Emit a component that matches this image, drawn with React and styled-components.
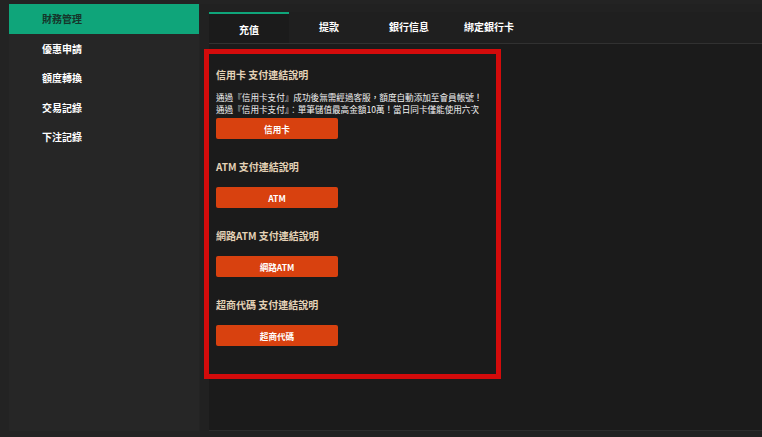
import React from "react";
import styled, { createGlobalStyle } from "styled-components";

const Global = createGlobalStyle`
  html, body { margin: 0; padding: 0; background: #232323; }
  body { font-family: "Noto Sans CJK TC", "Noto Sans", "Liberation Sans", sans-serif; }
  * { box-sizing: border-box; }
`;

const Page = styled.div`
  display: flex;
  height: 437px;
  padding: 4px 0 0 9px;
  background: #232323;
`;

const Sidebar = styled.nav`
  width: 190px;
  height: 427px;
  background: #262626;
  display: flex;
  flex-direction: column;
`;

const MenuItem = styled.div`
  height: 29.5px;
  display: flex;
  align-items: center;
  padding-left: 33px;
  font-size: 10px;
  font-weight: 700;
  color: ${(p) => (p.$active ? "#15352a" : "#ffffff")};
  background: ${(p) => (p.$active ? "#0fa57a" : "transparent")};
`;

const Main = styled.main`
  flex: 1;
  display: flex;
  flex-direction: column;
  margin-left: 1px;
  padding: 8px 0 6px 9px;
  background: #212121;
`;

const TabBar = styled.div`
  display: flex;
  height: 32px;
  border-bottom: 1px solid #313131;
  background: #1f1f1f;
`;

const Tab = styled.div`
  width: 80px;
  display: flex;
  justify-content: center;
  align-items: ${(p) => (p.$active ? "center" : "flex-start")};
  padding-top: ${(p) => (p.$active ? "2px" : "5px")};
  font-size: 10px;
  font-weight: 700;
  color: #ffffff;
  background: ${(p) => (p.$active ? "#1b1b1b" : "transparent")};
  border-top: 2px solid ${(p) => (p.$active ? "#0fa57a" : "transparent")};
`;

const Panel = styled.div`
  flex: 1;
  background: #1b1b1b;
  border-bottom: 1px solid #2c2c2c;
  padding-top: 5px;
`;

const Highlight = styled.div`
  width: 297px;
  margin-left: -5px;
  border: 5px solid #d30b0b;
  padding: 14px 0 28px 7px;
  display: flex;
  flex-direction: column;
  gap: 21px;
`;

const Section = styled.section`
  display: flex;
  flex-direction: column;
  align-items: flex-start;
`;

const Title = styled.div`
  font-size: 10px;
  line-height: 14px;
  font-weight: 700;
  color: #e4d2b6;
  margin-bottom: 13px;
  white-space: nowrap;
`;

const Desc = styled.div`
  font-size: 8.6px;
  line-height: 12px;
  color: #f2f2f2;
  margin: -4px 0 3px;
  white-space: nowrap;
`;

const PayButton = styled.button`
  width: 122px;
  height: 21px;
  border: none;
  border-radius: 2px;
  background: #d8410f;
  color: #ffffff;
  font-family: inherit;
  font-size: 8.6px;
  font-weight: 700;
  padding: 0;
  cursor: pointer;
`;

const menu = ["財務管理", "優惠申請", "額度轉換", "交易記錄", "下注記錄"];
const tabs = ["充值", "提款", "銀行信息", "綁定銀行卡"];
const methods = [
  {
    title: "信用卡 支付連結說明",
    button: "信用卡",
    desc: [
      "通過『信用卡支付』成功後無需經過客服，額度自動添加至會員帳號！",
      "通過『信用卡支付』：單筆儲值最高金額10萬！當日同卡僅能使用六次",
    ],
  },
  { title: "ATM 支付連結說明", button: "ATM" },
  { title: "網路ATM 支付連結說明", button: "網路ATM" },
  { title: "超商代碼 支付連結說明", button: "超商代碼" },
];

export default function App() {
  return (
    <>
      <Global />
      <Page>
        <Sidebar>
          {menu.map((m, i) => (
            <MenuItem key={m} $active={i === 0}>
              {m}
            </MenuItem>
          ))}
        </Sidebar>
        <Main>
          <TabBar>
            {tabs.map((t, i) => (
              <Tab key={t} $active={i === 0}>
                {t}
              </Tab>
            ))}
          </TabBar>
          <Panel>
            <Highlight>
              {methods.map((m) => (
                <Section key={m.title}>
                  <Title>{m.title}</Title>
                  {m.desc && (
                    <Desc>
                      {m.desc.map((d) => (
                        <div key={d}>{d}</div>
                      ))}
                    </Desc>
                  )}
                  <PayButton>{m.button}</PayButton>
                </Section>
              ))}
            </Highlight>
          </Panel>
        </Main>
      </Page>
    </>
  );
}
